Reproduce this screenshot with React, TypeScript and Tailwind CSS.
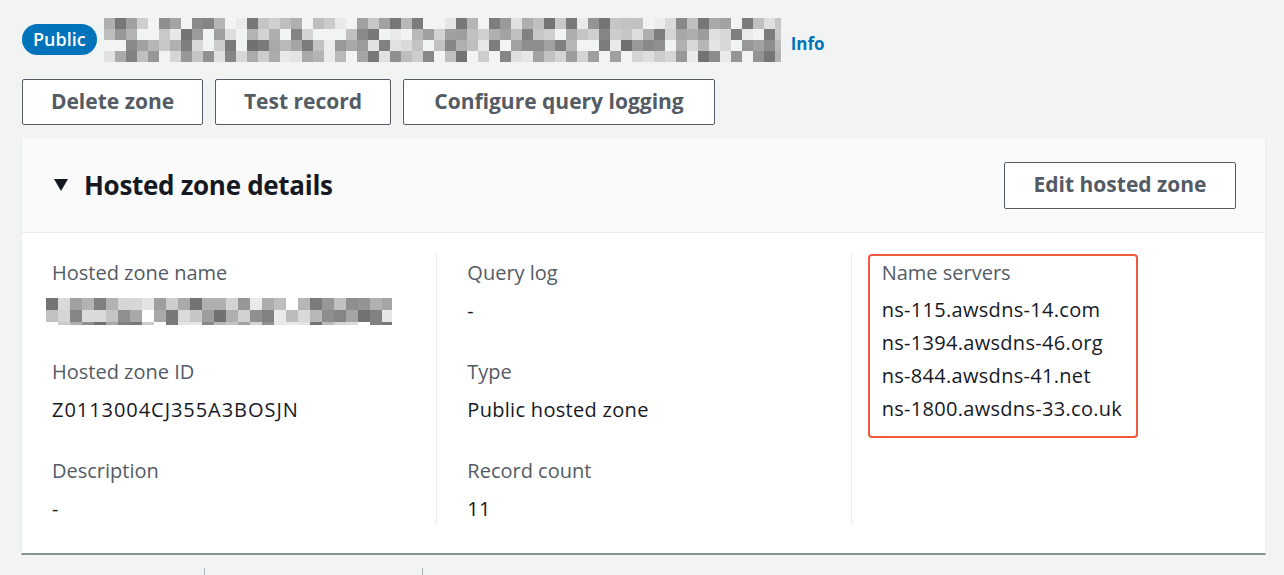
import React from 'react';

const FONT = { fontFamily: '"Open Sans", "Noto Sans", Arial, sans-serif' };

// deterministic pseudo-random mosaic used for the redacted zone name
function mosaic(seed: number, cols: number, rows: number, light: number) {
  let s = seed;
  const rnd = () => {
    s = (s * 1103515245 + 12345) % 2147483648;
    return s / 2147483648;
  };
  const cells: { x: number; y: number; c: string }[] = [];
  for (let r = 0; r < rows; r++) {
    for (let c = 0; c < cols; c++) {
      const v = rnd();
      if (v < light) continue;
      const g = Math.round(0x70 + rnd() * 0x7c);
      const hex = g.toString(16).padStart(2, '0');
      cells.push({ x: c, y: r, c: `#${hex}${hex}${hex}` });
    }
  }
  return cells;
}

const Redacted: React.FC<{ w: number; h: number; cell: number; seed: number; light: number }> = ({ w, h, cell, seed, light }) => {
  const cols = Math.ceil(w / cell);
  const rows = Math.ceil(h / cell);
  const cells = mosaic(seed, cols, rows, light);
  return (
    <svg width={w} height={h} viewBox={`0 0 ${w} ${h}`} className="block">
      {cells.map((p, i) => (
        <rect key={i} x={p.x * cell} y={p.y * cell} width={cell} height={cell} fill={p.c} />
      ))}
    </svg>
  );
};

const ActionButton: React.FC<{ label: string; w: string }> = ({ label, w }) => (
  <button className={`h-[46px] ${w} rounded-[2px] border border-[#545b64] bg-white text-[21px] font-bold text-[#545b64]`}>
    {label}
  </button>
);

const Field: React.FC<{ label: string; children: React.ReactNode }> = ({ label, children }) => (
  <div className="flex flex-col">
    <div className="text-[20px] leading-[24px] text-[#545b64]">{label}</div>
    <div className="mt-[14px] h-[24px] text-[20px] leading-[24px] tracking-[0.3px] text-[#16191f]">{children}</div>
  </div>
);

const nameServers = [
  'ns-115.awsdns-14.com',
  'ns-1394.awsdns-46.org',
  'ns-844.awsdns-41.net',
  'ns-1800.awsdns-33.co.uk',
];

export default function App() {
  return (
    <div className="h-[575px] w-[1284px] overflow-hidden bg-[#f2f3f3]" style={FONT}>
      {/* header row */}
      <div className="flex items-center pl-[22px] pt-[17px] h-[62px]">
        <span className="flex h-[31px] items-center rounded-full bg-[#0073bb] px-[11px] text-[18px] font-semibold text-white">Public</span>
        <div className="ml-[7px]">
          <Redacted w={677} h={44} cell={11} seed={17} light={0.2} />
        </div>
        <a className="ml-[10px] mt-[8px] text-[17px] font-bold text-[#0073bb]">Info</a>
      </div>

      {/* actions */}
      <div className="mt-[17px] flex gap-[12px] pl-[22px]">
        <ActionButton label="Delete zone" w="w-[181px]" />
        <ActionButton label="Test record" w="w-[176px]" />
        <ActionButton label="Configure query logging" w="w-[312px]" />
      </div>

      {/* container */}
      <div className="ml-[21px] mt-[13px] w-[1245px] border-l border-r border-[#eaeded] border-b-2 border-b-[#879596] bg-white">
        <div className="flex h-[95px] items-center justify-between border-b border-[#eaeded] bg-[#fafafa] pl-[32px] pr-[29px]">
          <div className="flex items-center">
            <svg width="14" height="12" viewBox="0 0 14 12" className="block">
              <path d="M0 0 H14 L7 12 Z" fill="#16191f" />
            </svg>
            <h2 className="ml-[16px] text-[26px] font-bold text-[#16191f] tracking-[-0.3px]">Hosted zone details</h2>
          </div>
          <button className="h-[47px] w-[232px] rounded-[2px] border border-[#545b64] bg-white text-[21px] font-bold text-[#545b64]">
            Edit hosted zone
          </button>
        </div>

        <div className="grid grid-cols-3 pb-[29px] pt-[21px]">
          <div className="flex flex-col gap-[37px] pb-[3px] pl-[30px] pt-[7px]">
            <Field label="Hosted zone name">
              <div className="-ml-[6px] -mt-[1px]">
                <Redacted w={346} h={27} cell={12} seed={91} light={0.05} />
              </div>
            </Field>
            <Field label="Hosted zone ID">
              <span className="tracking-[0.95px]">Z0113004CJ355A3BOSJN</span>
            </Field>
            <Field label="Description">-</Field>
          </div>
          <div className="flex flex-col gap-[37px] border-l border-[#eaeded] pb-[3px] pl-[30px] pt-[7px]">
            <Field label="Query log">-</Field>
            <Field label="Type">Public hosted zone</Field>
            <Field label="Record count">11</Field>
          </div>
          <div className="border-l border-[#eaeded] pl-[16px]">
            <div className="w-[270px] rounded-[4px] border-2 border-[#f2583e] px-[12px] pb-[11px] pt-[3px]">
              <div className="text-[20px] leading-[28px] text-[#545b64]">Name servers</div>
              <div className="mt-[6px] flex flex-col">
                {nameServers.map((ns) => (
                  <div key={ns} className="text-[20px] leading-[33px] tracking-[0.3px] text-[#16191f]">{ns}</div>
                ))}
              </div>
            </div>
          </div>
        </div>
      </div>

      {/* next table header peeking */}
      <div className="ml-[204px] mt-[13px] flex">
        <div className="h-[8px] w-[219px] border-l border-r border-[#aab7b8]" />
      </div>
    </div>
  );
}
